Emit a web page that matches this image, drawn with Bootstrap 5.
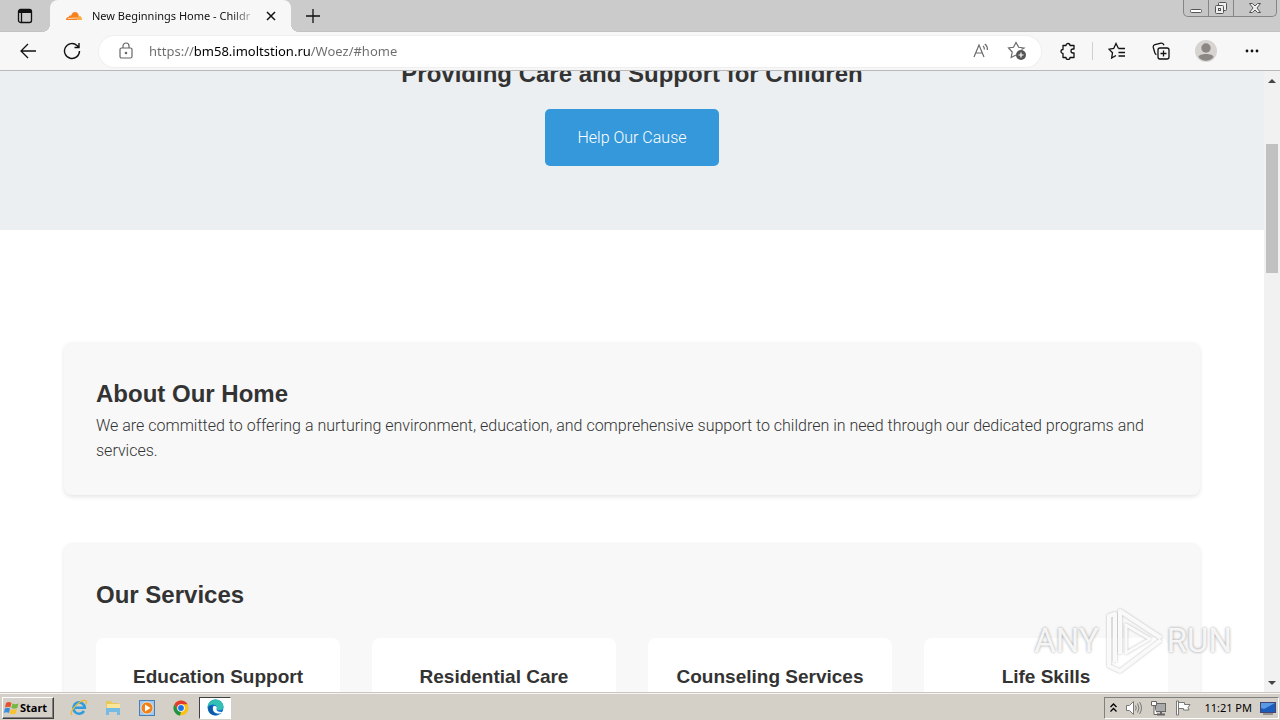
<!DOCTYPE html>
<html lang="en">
<head>
<meta charset="utf-8">
<meta name="viewport" content="width=device-width, initial-scale=1">
<title>New Beginnings Home</title>
<link rel="stylesheet" href="https://cdn.jsdelivr.net/npm/bootstrap@5.3.0/dist/css/bootstrap.min.css">
<style>
body{font-family:Roboto,"Liberation Sans",sans-serif;font-weight:300;font-size:16px;line-height:25px;color:#333;background:#fff}
button{border:0;background:none;padding:0;color:#111}
svg{display:block;flex:none}
.chrome-ui{font-family:"Noto Sans","Open Sans",sans-serif;font-weight:400}
/* tab strip */
.tabstrip{height:32px;background:#cbcbcb;border-bottom:1px solid #c2c2c2}
.tool-w{width:44px;height:36px}
.tool-x{width:46px;height:36px}
.tabmenu{width:50px}
.browser-tab{width:241px;height:32px;background:#f7f7f7;border-radius:8px 8px 0 0;padding:0 12px 0 16px;position:relative}
.browser-tab::before,.browser-tab::after{content:"";position:absolute;bottom:0;width:8px;height:8px}
.browser-tab::before{left:-8px;background:radial-gradient(circle at 0 0,#cbcbcb 8px,#f7f7f7 8px)}
.browser-tab::after{right:-8px;background:radial-gradient(circle at 100% 0,#cbcbcb 8px,#f7f7f7 8px)}
.tab-title{font-size:11px;line-height:16px;color:#111;white-space:nowrap;margin-left:10px;-webkit-mask-image:linear-gradient(90deg,#000 88%,rgba(0,0,0,.3))}
.win-controls{height:17px;border:1px solid #858585;border-top:0;border-radius:0 0 5px 5px;background:#c6c6c6;margin-right:3px}
.win-controls button{width:25px;height:16px;border-right:1px solid #858585}
.win-controls button:last-child{width:42px;border-right:0}
/* toolbar */
.toolbar{height:39px;background:#f7f7f7;border-bottom:1px solid #b9b9b9;padding:0 5px 0 6px}
.address{height:31px;border-radius:16px;background:#fff;box-shadow:0 0 0 1px #efefef;margin:0 5px;padding:0 6px 0 19px}
.address input{border:0;outline:0;padding:0;margin-left:15px;min-width:0;font-size:13px;line-height:20px;color:#6c6c6c;
background:linear-gradient(90deg,#6c6c6c 45px,#000 45px,#000 161px,#6c6c6c 161px);-webkit-background-clip:text;background-clip:text;-webkit-text-fill-color:transparent}
.address button{width:36px;height:30px;color:#6a6a6a}
.tool-sep{width:1px;height:18px;background:#cfcfcf;margin:0 2px}
/* page */
.page{overflow:hidden;min-width:0}
.hero{height:159px;background:#eceff1;padding-bottom:64px}
h2,h3{font-family:"Liberation Sans",Arial,sans-serif;font-weight:700;margin:0}
h2{font-size:24px;line-height:39px}
h3{font-size:19px;line-height:30px}
.cta{background:#3498db;color:#fff;border-radius:5px;padding:16px 32px;font-weight:300;line-height:25px;margin-top:16px;border:0}
.cta:hover{background:#2980b9;color:#fff}
.sections{padding:112px 64px 0}
.panel{background:#f8f8f8;border-radius:8px;padding:32px;box-shadow:0 2px 4px rgba(0,0,0,.1);margin-bottom:48px}
.services{--bs-gutter-x:32px;margin-top:24px}
.service{background:#fff;border-radius:8px;padding:24px 16px}
/* scrollbar */
.scrollbar{width:16px;background:#f1f1f1;flex:none}
.scrollbar button{height:18px;width:16px;color:#444}
.thumb{width:12px;background:#c1c1c1;height:22%}
/* watermark */
.watermark{position:absolute;right:48px;bottom:16px;font:400 33px/70px Roboto,"Liberation Sans",sans-serif;color:rgba(255,255,255,.9);text-shadow:0 0 3px rgba(0,0,0,.4);pointer-events:none}
.watermark svg{filter:drop-shadow(0 0 1px rgba(0,0,0,.3))}
/* taskbar */
.taskbar{height:28px;background:#d4d0c8;border-top:1px solid #c9c6c0;box-shadow:inset 0 1px #f6f5f2;padding:3px 1px 1px 2px;font-size:11px;line-height:16px;color:#000;flex:none}
.start{width:52px;height:22px;border:1px solid;border-color:#fff #404040 #404040 #fff;box-shadow:inset -1px -1px #808080;font-weight:700;font-size:11px;color:#000;padding-left:1px}
.task{width:34px;height:22px}
.task.active{background:#fff;border:1px solid;border-color:#404040 #fff #fff #404040;width:32px;margin-left:1px}
.tray{height:22px;border:1px solid;border-color:#808080 #fff #fff #808080;padding:0 2px 0 5px}
.clock{margin:0 8px 0 12px}
</style>
</head>
<body>
<div class="vh-100 d-flex flex-column overflow-hidden">
<header class="chrome-ui flex-shrink-0">
<div class="tabstrip d-flex">
<button class="tabmenu d-flex align-items-center justify-content-center" aria-label="Tab actions"><svg width="16" height="16" viewBox="0 0 16 16" fill="none" stroke="#111" stroke-width="1.3"><rect x="1.5" y="1.5" width="13" height="13" rx="2"/><path d="M2 3.5h12" stroke-width="3"/><path d="M4.5 5v9"/></svg></button>
<div class="browser-tab d-flex align-items-center">
<svg width="16" height="16" viewBox="0 0 16 16"><path d="M0 12c0-2 1-3 2.700-3C3 7.500 4.200 7.200 5 7.800 6 5 7.500 4 9 4c2 0 3.300 1.300 3.700 3.300L11 12z" fill="#f6821f"/><path d="M11 12l1.500-4.600C15 7.500 16 9.500 16 12z" fill="#fbad41"/><path d="M2 10.500l9-.5" stroke="#fff" stroke-width=".7"/></svg>
<div class="tab-title me-auto">New Beginnings Home - Childr</div>
<button aria-label="Close tab"><svg width="16" height="16" viewBox="0 0 16 16" stroke="#111" stroke-width="1.500"><path d="M4 4l8 8M12 4l-8 8"/></svg></button>
</div>
<button class="tool-w d-flex align-items-center justify-content-center h-100" aria-label="New tab"><svg width="16" height="16" viewBox="0 0 16 16" stroke="#111" stroke-width="1.300"><path d="M8 1v14M1 8h14"/></svg></button>
<div class="win-controls d-flex ms-auto">
<button class="d-flex align-items-center justify-content-center" aria-label="Minimize"><svg width="14" height="14" viewBox="0 0 14 14"><rect x="1.500" y="8.500" width="11" height="3" rx="1" fill="#fff" stroke="#555"/></svg></button>
<button class="d-flex align-items-center justify-content-center" aria-label="Restore"><svg width="14" height="14" viewBox="0 0 14 14" fill="#eee" stroke="#555"><rect x="4.500" y="1.500" width="8" height="8" rx="1"/><rect x="1.500" y="4.500" width="8" height="8" rx="1"/><rect x="4.500" y="7.500" width="2" height="2"/></svg></button>
<button class="d-flex align-items-center justify-content-center" aria-label="Close"><svg width="14" height="14" viewBox="0 0 14 14"><path d="M1.500 2.500h3L7 5l2.500-2.500h3L9 7l3.500 4.500h-3L7 9l-2.500 2.500h-3L5 7z" fill="#eee" stroke="#555"/></svg></button>
</div>
</div>
<div class="toolbar d-flex align-items-center">
<button class="tool-w d-flex align-items-center justify-content-center" aria-label="Back"><svg width="18" height="16" viewBox="0 0 18 16" fill="none" stroke="#111" stroke-width="1.300"><path d="M17 8H2M9 1L2 8l7 7"/></svg></button>
<button class="tool-w d-flex align-items-center justify-content-center" aria-label="Refresh"><svg width="18" height="18" viewBox="0 0 18 18" fill="none" stroke="#111" stroke-width="1.400"><path d="M16.500 9a7.500 7.500 0 1 1-2.500-5.600l1.500 1.600M16 1v4.500h-4.500"/></svg></button>
<div class="address d-flex align-items-center flex-grow-1">
<svg width="16" height="18" viewBox="0 0 16 18" fill="none" stroke="#666" stroke-width="1.200"><rect x="2" y="6" width="12" height="10" rx="1.500"/><path d="M5 6V4a3 3 0 0 1 6 0v2"/><circle cx="8" cy="11" r=".7" fill="#666"/></svg>
<input class="flex-grow-1" type="text" aria-label="Address" value="https://bm58.imoltstion.ru/Woez/#home">
<button class="d-flex align-items-center justify-content-center" aria-label="Read aloud"><svg width="18" height="18" viewBox="0 0 18 18" fill="none" stroke="currentColor" stroke-width="1.200"><path d="M2 15L7 3l5 12M3.800 11h6.400M11 4c1 .8 1.500 2 1.400 3.500M12.800 2c2 1.500 2.800 3.500 2.600 6"/></svg></button>
<button class="d-flex align-items-center justify-content-center" aria-label="Add to favorites"><svg width="20" height="20" viewBox="0 0 20 20" fill="none" stroke="currentColor" stroke-width="1.200"><path d="M14.500 8.500L17 7l-5.300-.7L9 1.500 6.500 6.300 1.500 7l3.700 4-1 5.500L9 14"/><circle cx="14" cy="14" r="5" fill="#555" stroke="none"/><path d="M14 11.500v5M11.500 14h5" stroke="#fff"/></svg></button>
</div>
<button class="tool-w d-flex align-items-center justify-content-center" aria-label="Extensions"><svg width="18" height="18" viewBox="0 0 18 18" fill="none" stroke="#111" stroke-width="1.300" stroke-linejoin="round"><path d="M4 3.500h3a2 2 0 0 1 4 0h4V7h-1a2 2 0 0 0 0 4h1v4.500h-4a2 2 0 0 1-4 0H4V11.500a2 2 0 0 1 0-4z"/></svg></button>
<div class="tool-sep"></div>
<button class="tool-w d-flex align-items-center justify-content-center" aria-label="Favorites"><svg width="18" height="18" viewBox="0 0 18 18" fill="none" stroke="#111" stroke-width="1.300"><path d="M10.500 6.500L8 1.500 5.700 6.500 1 7.200l3.500 3.500-.8 5.300L8 13.500M10.500 6.500H17M10.500 10.500H17M10.500 14H17"/></svg></button>
<button class="tool-w d-flex align-items-center justify-content-center" aria-label="Collections"><svg width="18" height="18" viewBox="0 0 18 18" fill="none" stroke="#111" stroke-width="1.300"><rect x="6" y="6" width="11" height="11" rx="2"/><path d="M11.500 8.500v6M8.500 11.500h6M4.500 12.500C3 12.500 3 11.500 2.600 10L1.300 5.500C1 4 1.500 3 3 2.600L9 1.200c1.500-.3 2.500.3 3 2"/></svg></button>
<button class="tool-x d-flex align-items-center justify-content-center" aria-label="Profile"><svg width="22" height="22" viewBox="0 0 22 22"><circle cx="11" cy="11" r="11" fill="#d6d3d0"/><circle cx="11" cy="8" r="4.700" fill="#8b8784"/><path d="M3.500 17c0-4 15-4 15 0-3.500 5-11.500 5-15 0z" fill="#8b8784"/></svg></button>
<button class="tool-x d-flex align-items-center justify-content-center" aria-label="Settings and more"><svg width="16" height="4" viewBox="0 0 16 4" fill="#111"><circle cx="3" cy="2" r="1.400"/><circle cx="8" cy="2" r="1.400"/><circle cx="13" cy="2" r="1.400"/></svg></button>
</div>
</header>

<div class="d-flex flex-grow-1 overflow-hidden position-relative">
<main class="page flex-grow-1">
<section class="hero d-flex flex-column align-items-center justify-content-end">
<h2 class="flex-shrink-0">Providing Care and Support for Children</h2>
<button class="btn cta flex-shrink-0">Help Our Cause</button>
</section>
<div class="sections">
<section class="panel">
<h2>About Our Home</h2>
<p class="mb-0">We are committed to offering a nurturing environment, education, and comprehensive support to children in need through our dedicated programs and services.</p>
</section>
<section class="panel">
<h2>Our Services</h2>
<div class="row row-cols-4 services text-center">
<div class="col"><div class="service"><h3>Education Support</h3></div></div>
<div class="col"><div class="service"><h3>Residential Care</h3></div></div>
<div class="col"><div class="service"><h3>Counseling Services</h3></div></div>
<div class="col"><div class="service"><h3>Life Skills</h3></div></div>
</div>
</section>
</div>
</main>
<div class="scrollbar d-flex flex-column align-items-center">
<button class="d-flex align-items-center justify-content-center" aria-label="Scroll up"><svg width="8" height="5" viewBox="0 0 8 5"><path d="M0 5l4-4 4 4z" fill="#444"/></svg></button>
<div class="flex-grow-1 d-flex flex-column"><div style="height:9.400%"></div><div class="thumb"></div></div>
<button class="d-flex align-items-center justify-content-center" aria-label="Scroll down"><svg width="8" height="5" viewBox="0 0 8 5"><path d="M0 0l4 4 4-4z" fill="#444"/></svg></button>
</div>
<div class="watermark d-flex align-items-center"><span>ANY</span><svg class="mx-1" width="60" height="70" viewBox="0 0 60 70" fill="none" stroke="#fff" stroke-opacity=".9" stroke-width="4" stroke-linejoin="round"><path d="M17 48V5l41 27M58 34L17 65l-11-5V10l6-2v48"/><path d="M23 19v28l24-14z" stroke-width="3"/></svg><span>RUN</span></div>
</div>

<footer class="taskbar chrome-ui d-flex align-items-center">
<button class="start d-flex align-items-center"><svg width="16" height="16" viewBox="0 0 16 16"><path d="M2 3c2-1.500 4-1 5.500 0L6.300 7.500C5 6.500 3 6.300 1 7.500z" fill="#e5532d"/><path d="M8.500 3.500c2 1 4 1 6-.2L13.300 8c-2 1-4 1-6 0z" fill="#76b83f"/><path d="M.800 8.500c2-1.200 3.700-1 5.300 0L5 13c-2-1.200-3.500-1-5 0z" fill="#3b8ede"/><path d="M7 9c2 1 4 1 6 0l-1.300 4.500c-2 1-4 1-6 0z" fill="#fbc22c"/></svg><span>Start</span></button>
<div class="d-flex ms-2">
<button class="task d-flex align-items-center justify-content-center" aria-label="Internet Explorer"><svg width="18" height="18" viewBox="0 0 18 18" fill="none"><path d="M14 12a5.700 5.700 0 1 1 .8-3.200H5" stroke="#2f9ddf" stroke-width="2.600"/><path d="M2 16C-2 12 12-1 16 2c1 .7.500 2-.3 3" stroke="#edb92e" stroke-width="1.300"/></svg></button>
<button class="task d-flex align-items-center justify-content-center" aria-label="File Explorer"><svg width="18" height="18" viewBox="0 0 18 18"><path d="M2 2h5l1 2h7v9H2z" fill="#e9c85b"/><path d="M3 5h13v7H3z" fill="#fae69b"/><path d="M2 9h14v7h-3v-3H5v3H2z" fill="#75bbe3"/></svg></button>
<button class="task d-flex align-items-center justify-content-center" aria-label="Media Player"><svg width="16" height="16" viewBox="0 0 16 16"><rect x=".5" y=".5" width="15" height="15" fill="#9fc8ef" stroke="#477eb4"/><circle cx="8" cy="8" r="6" fill="#f08019" stroke="#fff" stroke-width=".6"/><path d="M6 4.500v7L11.500 8z" fill="#fff"/></svg></button>
<button class="task d-flex align-items-center justify-content-center" aria-label="Chrome"><svg width="16" height="16" viewBox="0 0 16 16"><circle cx="8" cy="8" r="7.500" fill="#fbc116"/><path d="M1.500 4.200A7.500 7.500 0 0 1 14.500 4.200H8L4.700 10z" fill="#e33b2e"/><path d="M1.500 4.200L4.700 10 8 12l-1 3.500A7.500 7.500 0 0 1 1.500 4.200z" fill="#229342"/><circle cx="8" cy="8" r="3.800" fill="#fff"/><circle cx="8" cy="8" r="2.900" fill="#1a73e8"/></svg></button>
<button class="task active d-flex align-items-center justify-content-center" aria-label="Edge"><svg width="17" height="17" viewBox="0 0 17 17"><circle cx="8.500" cy="8.500" r="8" fill="#1178cc"/><path d="M.500 8C1 3 5 .500 8.500.500c5 0 8 3.500 8 7 0 3-3 4-5.500 3.500-2-.5-1-1.500-1-2.500C10 5.500 4 4 .500 8z" fill="#33c0b4"/><path d="M6 8c-1 4 2 7 7 6.500 1-.2 2-1 2.500-1.500-4 .5-6-1-6-3 0-1 .7-1.300 0-2.300C8.500 6.500 6.500 7 6 8z" fill="#fff"/><path d="M3 14C-1 8 3 5.500 6 7c-2 4 1 8 5 9-3 .8-6 0-8-2z" fill="#0d5aa7"/></svg></button>
</div>
<div class="tray d-flex align-items-center ms-auto">
<svg class="me-2" width="7" height="10" viewBox="0 0 7 10" fill="none" stroke="#000" stroke-width="1.300"><path d="M.500 4l3-3 3 3M.500 8.500l3-3 3 3"/></svg>
<svg class="me-2" width="17" height="16" viewBox="0 0 17 16" fill="none" stroke="#777"><path d="M1.500 5.500h3l4-4v13l-4-4h-3z" fill="#fff"/><path d="M10.500 5.500q1.500 2.500 0 5M12.500 3.500q3 4.500 0 9M14.500 2q4 6 0 12"/></svg>
<svg class="me-2" width="17" height="16" viewBox="0 0 17 16" stroke="#666"><rect x="5.500" y="3.500" width="10" height="8" fill="#aaa"/><path d="M7 14.500h8M11 12v2" fill="none" stroke-width="2"/><path d="M1.500 1.500h5v4h-5zM4 6v8.500h3" fill="#fff"/></svg>
<svg width="17" height="16" viewBox="0 0 17 16" stroke="#777" fill="#fff"><path d="M1.500 1v14h2V1zM3.500 2.500h6v2h5.500l-2 3 1 2.500H8.500V8.500h-5z"/></svg>
<span class="clock">11:21 PM</span>
<svg width="16" height="16" viewBox="0 0 16 16"><rect x=".5" y="2.500" width="15" height="10" fill="#1c5cbb" stroke="#447"/><path d="M1 3h14L4 9 1 8z" fill="#5a9ae5"/><path d="M3 14h10" stroke="#555"/></svg>
</div>
</footer>
</div>
<script src="https://cdn.jsdelivr.net/npm/bootstrap@5.3.0/dist/js/bootstrap.bundle.min.js"></script>
</body>
</html>
